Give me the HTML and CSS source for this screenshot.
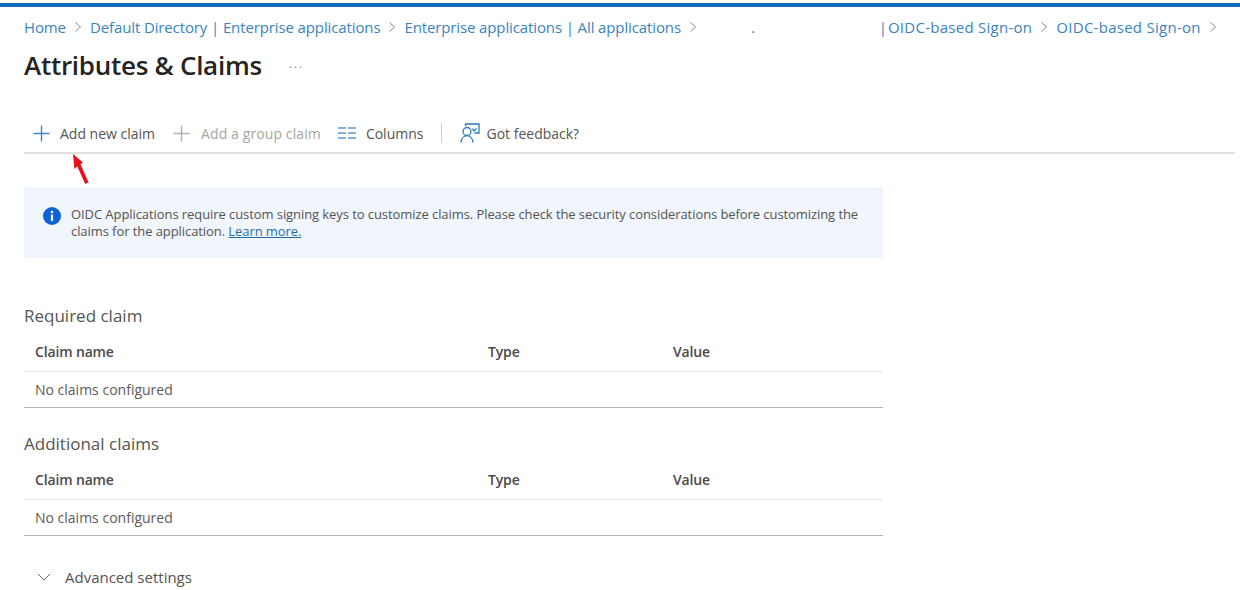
FILE: index.html
```html
<!DOCTYPE html>
<html lang="en">
<head>
  <meta charset="UTF-8">
  <meta name="viewport" content="width=device-width, initial-scale=1.0">
  <title>Attributes &amp; Claims</title>
  <link rel="stylesheet" href="styles.css">
</head>
<body>

  <div class="top-bar"></div>

  <div class="page">

    <!-- Breadcrumb -->
    <nav class="crumbs">
      <a class="crumb">Home</a>
      <svg class="chev" viewBox="0 0 8 12"><path d="M1.5 1.5 6.5 6l-5 4.5"/></svg>
      <a class="crumb">Default Directory | Enterprise applications</a>
      <svg class="chev" viewBox="0 0 8 12"><path d="M1.5 1.5 6.5 6l-5 4.5"/></svg>
      <a class="crumb">Enterprise applications | All applications</a>
      <svg class="chev" viewBox="0 0 8 12"><path d="M1.5 1.5 6.5 6l-5 4.5"/></svg>
      <span class="crumb-dot">.</span>
      <span class="crumb crumb-pipe">|</span>
      <a class="crumb crumb-wide">OIDC-based Sign-on</a>
      <svg class="chev" viewBox="0 0 8 12"><path d="M1.5 1.5 6.5 6l-5 4.5"/></svg>
      <a class="crumb crumb-wide">OIDC-based Sign-on</a>
      <svg class="chev" viewBox="0 0 8 12"><path d="M1.5 1.5 6.5 6l-5 4.5"/></svg>
    </nav>

    <!-- Title -->
    <div class="title-row">
      <h1>Attributes &amp; Claims</h1>
      <span class="more">...</span>
    </div>

    <!-- Toolbar -->
    <div class="toolbar">
      <button class="tool tool-add">
        <svg class="icon-plus" viewBox="0 0 18 18"><path d="M9 .5v17M.5 9h17"/></svg>
        Add new claim
      </button>
      <button class="tool tool-group" disabled>
        <svg class="icon-plus" viewBox="0 0 18 18"><path d="M9 .5v17M.5 9h17"/></svg>
        Add a group claim
      </button>
      <button class="tool tool-columns">
        <svg class="icon-columns" viewBox="0 0 18 12"><path d="M0 1h8M10 1h8M0 6h8M10 6h8M0 11h8M10 11h8"/></svg>
        Columns
      </button>
      <span class="tool-sep"></span>
      <button class="tool tool-feedback">
        <svg class="icon-feedback" viewBox="0 0 20 20">
          <circle cx="7" cy="8.500" r="4"/>
          <path d="M1 19.500c.3-4 2.800-6.800 6-6.800s5.700 2.800 6 6.800"/>
          <path d="M5.500 3V1H19v9h-4.500"/>
          <path d="m12.500 5.500 1.500 2.500 2.500-2.500"/>
        </svg>
        Got feedback?
      </button>
      <!-- Red annotation arrow -->
      <svg class="arrow" viewBox="0 0 20 34"><path d="M2 1 12.500 10 10 12 18.500 31 15 33 6.500 14 3.500 17z"/></svg>
    </div>

    <!-- Info banner -->
    <div class="info">
      <svg class="info-icon" viewBox="0 0 18 18">
        <circle cx="9" cy="9" r="9"/>
        <circle class="info-mark" cx="9" cy="5" r="1.300"/>
        <rect class="info-mark" x="7.900" y="7.500" width="2.200" height="6.500"/>
      </svg>
      <p>OIDC Applications require custom signing keys to customize claims. Please check the security considerations before customizing the claims for the application. <a href="#">Learn more.</a></p>
    </div>

    <!-- Required claim -->
    <section class="claims claims-first">
      <h2>Required claim</h2>
      <div class="row row-head">
        <span>Claim name</span><span>Type</span><span>Value</span>
      </div>
      <div class="row row-body">No claims configured</div>
    </section>

    <!-- Additional claims -->
    <section class="claims">
      <h2>Additional claims</h2>
      <div class="row row-head">
        <span>Claim name</span><span>Type</span><span>Value</span>
      </div>
      <div class="row row-body">No claims configured</div>
    </section>

    <div class="advanced">
      <svg class="chev-down" viewBox="0 0 16 9"><path d="M1 1l7 7 7-7"/></svg>
      Advanced settings
    </div>

  </div>

</body>
</html>
```

FILE: styles.css
```css
/* General Styles */
html, body {
  height: 100%;
  overflow: hidden;
}

body {
  font-family: "Open Sans", "Noto Sans", sans-serif;
  background-color: #fff;
  color: #323130;
  margin: 0;
  padding-top: 3px;
}

.top-bar {
  height: 4px;
  background-color: #0f6cbd;
}

.page {
  padding: 0 5px 0 24px;
}

/* Breadcrumb */
.crumbs {
  display: flex;
  align-items: center;
  height: 19px;
  margin-top: 10px;
  font-size: 15px;
  white-space: nowrap;
  letter-spacing: -0.12px;
}

.crumb {
  color: #3a84bd;
}

.crumb-dot {
  margin-left: 46px;
  color: #3a84bd;
}

.crumb-pipe {
  margin-left: 124px;
  margin-right: 1px;
}

.crumb-wide {
  letter-spacing: 0.27px;
}

.chev {
  width: 8px;
  height: 12px;
  margin: 0 8px;
  fill: none;
  stroke: #8a8886;
  stroke-width: 1;
}

/* Title */
.title-row {
  display: flex;
  align-items: center;
  margin-top: 14px;
  height: 30px;
}

h1 {
  margin: 0;
  font-size: 26px;
  font-weight: 600;
  color: #252423;
  letter-spacing: -0.28px;
}

.more {
  margin-left: 27px;
  margin-top: -4px;
  font-size: 12px;
  letter-spacing: 2px;
  color: #8a8886;
}

/* Toolbar */
.toolbar {
  position: relative;
  display: flex;
  align-items: center;
  height: 38px;
  margin-top: 34px;
  padding-left: 9px;
  border-bottom: 2px solid #e1e0df;
}

.tool {
  display: flex;
  align-items: center;
  padding: 0;
  border: none;
  background: none;
  font-family: inherit;
  font-size: 14px;
  color: #55544f;
}

.tool-group {
  margin-left: 18px;
  letter-spacing: 0.1px;
  color: #a6a5a3;
}

.tool-columns {
  margin-left: 17px;
}

.tool-group .icon-plus {
  margin-right: 11px;
  stroke: #b3b2b0;
}

.tool-sep {
  width: 1px;
  height: 20px;
  margin: 0 18px;
  background-color: #d2d0ce;
}

.icon-plus {
  width: 17px;
  height: 17px;
  margin-right: 10px;
  fill: none;
  stroke: #3b8ecb;
  stroke-width: 1.500;
}

.icon-columns {
  width: 18px;
  height: 12px;
  margin-right: 10px;
  fill: none;
  stroke: #5b9bd0;
  stroke-width: 1.500;
}

.icon-feedback {
  width: 20px;
  height: 20px;
  margin-right: 6px;
  fill: none;
  stroke: #2a7ab8;
  stroke-width: 1.300;
}

.arrow {
  position: absolute;
  left: 47px;
  top: 39px;
  width: 19px;
  height: 32px;
  fill: #e8101c;
}

/* Info banner */
.info {
  display: flex;
  width: 824px;
  height: 52px;
  margin-top: 33px;
  padding: 19px 16px 0 19px;
  background-color: #f0f5fe;
}

.info-icon {
  flex: none;
  width: 18px;
  height: 18px;
  margin-top: 1px;
  margin-right: 10px;
  fill: #0f62d6;
}

.info-mark {
  fill: #fff;
}

.info p {
  margin: 0;
  font-size: 13px;
  line-height: 17px;
  letter-spacing: -0.075px;
  color: #55544f;
}

.info a {
  color: #1e6fa8;
}

/* Claim tables */
.claims {
  width: 859px;
  margin-top: 24px;
}

.claims-first {
  margin-top: 46px;
}

h2 {
  margin: 0;
  font-size: 17px;
  font-weight: 400;
  line-height: 24px;
  color: #55544f;
}

.row {
  display: grid;
  grid-template-columns: 453px 185px 1fr;
  align-items: center;
  padding-left: 11px;
  font-size: 14px;
}

.row-head {
  height: 35px;
  margin-top: 6px;
  padding-bottom: 2px;
  font-weight: 600;
  letter-spacing: -0.15px;
  color: #4a4a48;
  border-bottom: 1px solid #edebe9;
}

.row-body {
  display: block;
  height: 35px;
  line-height: 36px;
  color: #5c5b59;
  border-bottom: 1px solid #b5b4b2;
}

/* Advanced settings */
.advanced {
  display: flex;
  align-items: center;
  margin-top: 31px;
  padding-left: 13px;
  font-size: 15px;
  color: #55544f;
}

.chev-down {
  width: 14px;
  height: 8px;
  margin-right: 14px;
  fill: none;
  stroke: #5c5b59;
  stroke-width: 1.100;
}
```
